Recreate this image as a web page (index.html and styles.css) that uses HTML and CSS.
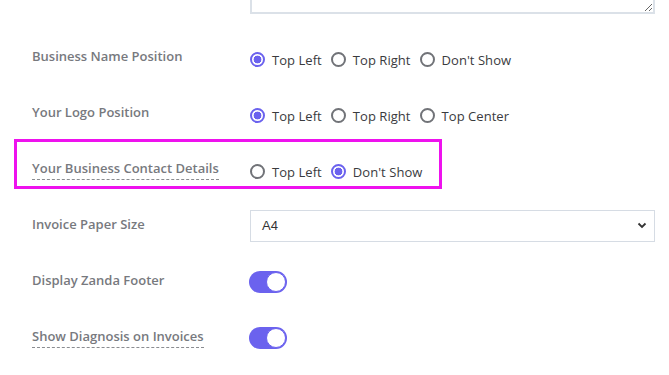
FILE: index.html
```html
<!DOCTYPE html>
<html lang="en">
<head>
<meta charset="utf-8">
<title>Invoice Settings</title>
<link rel="stylesheet" href="styles.css">
</head>
<body>
    <div class="settings">
        <div class="row rowNotes">
            <div class="label"></div>
            <textarea class="notes"></textarea>
        </div>

        <div class="row">
            <div class="label">Business Name Position</div>
            <div class="radios">
                <label class="radio"><input type="radio" name="bname" checked><span>Top Left</span></label>
                <label class="radio"><input type="radio" name="bname"><span>Top Right</span></label>
                <label class="radio"><input type="radio" name="bname"><span>Don't Show</span></label>
            </div>
        </div>

        <div class="row">
            <div class="label">Your Logo Position</div>
            <div class="radios">
                <label class="radio"><input type="radio" name="logo" checked><span>Top Left</span></label>
                <label class="radio"><input type="radio" name="logo"><span>Top Right</span></label>
                <label class="radio"><input type="radio" name="logo"><span>Top Center</span></label>
            </div>
        </div>

        <div class="row highlighted">
            <div class="label"><span class="hint">Your Business Contact Details</span></div>
            <div class="radios">
                <label class="radio"><input type="radio" name="contact"><span>Top Left</span></label>
                <label class="radio"><input type="radio" name="contact" checked><span>Don't Show</span></label>
            </div>
        </div>

        <div class="row">
            <div class="label">Invoice Paper Size</div>
            <div class="selectBox">
                <span>A4</span>
                <svg class="chevron" width="10" height="7" viewBox="0 0 10 7"><path d="M1.5 1.5 L5 5 L8.5 1.5" fill="none" stroke="#333" stroke-width="1.8"/></svg>
            </div>
        </div>

        <div class="row">
            <div class="label">Display Zanda Footer</div>
            <div class="toggle on"><span class="knob"></span></div>
        </div>

        <div class="row">
            <div class="label"><span class="hint">Show Diagnosis on Invoices</span></div>
            <div class="toggle on"><span class="knob"></span></div>
        </div>
    </div>
</body>
</html>
```

FILE: styles.css
```css
html, body {
	margin: 0;
	padding: 0;
	background: #fff;
	overflow: hidden;
}
.settings {
	font-family: "Open Sans", "Noto Sans", Arial, sans-serif;
	font-size: 13px;
	margin-top: -47px;
}
.row {
	display: grid;
	grid-template-columns: 218px 405px;
	padding-left: 32px;
	min-height: 56px;
	align-items: center;
	position: relative;
}
.rowNotes {
	min-height: 0;
	padding-bottom: 15px;
}
.label {
	font-weight: 600;
	color: #77797e;
	line-height: 18px;
	margin-top: -3px;
}
.hint {
	border-bottom: 1px dashed #8a8c90;
	padding-bottom: 2px;
}
.notes {
	display: block;
	box-sizing: border-box;
	width: 405px;
	height: 61px;
	margin: 0;
	border: 2px solid #dbe1e8;
	border-radius: 0;
	resize: vertical;
}

/* radio groups */
.radios {
	display: flex;
	align-items: center;
	gap: 9px;
	padding-top: 5px;
	color: #3a3b3e;
}
.radio {
	display: flex;
	align-items: center;
	gap: 7px;
	cursor: pointer;
}
.radio span {
	letter-spacing: 0.05px;
}
.radio input {
	appearance: none;
	-webkit-appearance: none;
	box-sizing: border-box;
	width: 15px;
	height: 15px;
	margin: 0;
	border: 2px solid #717378;
	border-radius: 50%;
	background: #fff;
}
.radio input:checked {
	border-color: #6b62ee;
	background: radial-gradient(circle, #6b62ee 0 3.6px, #fff 4.2px);
}

/* select */
.selectBox {
	box-sizing: border-box;
	height: 32px;
	border: 1px solid #d6dce4;
	display: flex;
	align-items: center;
	justify-content: space-between;
	padding: 0 7px 0 11px;
	font-family: "Liberation Sans", Arial, sans-serif;
	color: #333;
	margin-top: 1px;
}
.chevron {
	display: block;
}

/* toggles */
.toggle {
	width: 38px;
	height: 22px;
	border-radius: 11px;
	background: #6b62ee;
	position: relative;
	margin-left: -1px;
	margin-top: 2px;
}
.toggle .knob {
	position: absolute;
	top: 1px;
	right: 1px;
	width: 18px;
	height: 18px;
	border-radius: 50%;
	background: #fff;
	border: 1px solid #6b62ee;
}

/* annotation box */
.highlighted::after {
	content: "";
	position: absolute;
	left: 14px;
	top: -2px;
	width: 428px;
	height: 50px;
	box-sizing: border-box;
	border: 3px solid #ee12ee;
	pointer-events: none;
}
```
